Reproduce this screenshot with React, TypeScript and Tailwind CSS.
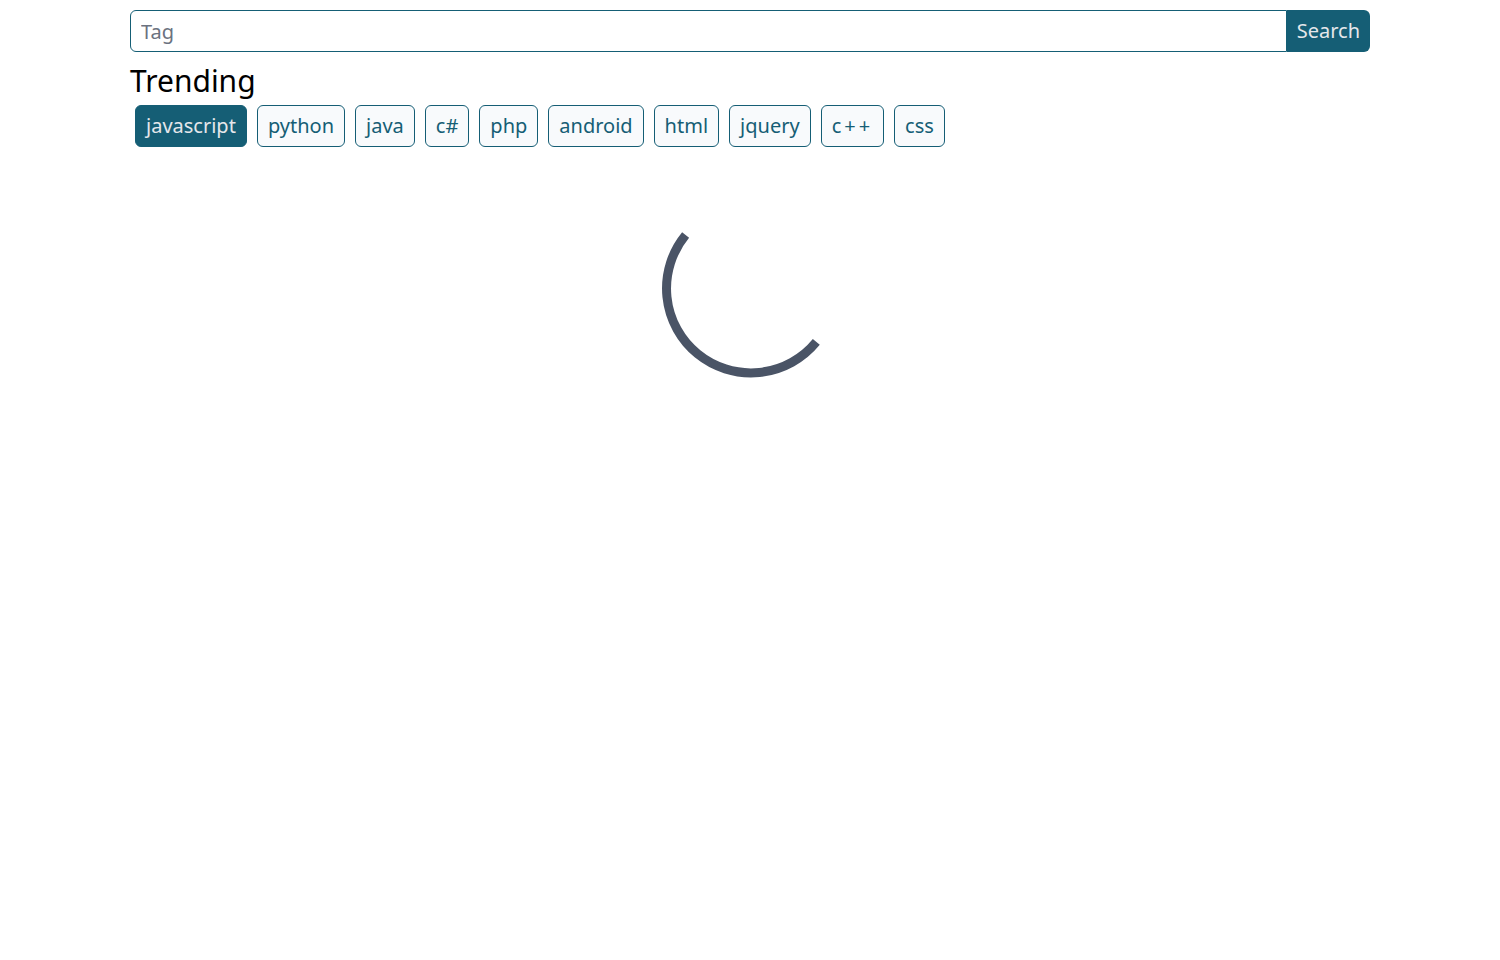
import React from "react";

const tags = ["javascript", "python", "java", "c#", "php", "android", "html", "jquery", "c++", "css"];

export default function App() {
  return (
    <div className="min-h-screen bg-white" style={{ fontFamily: '"Segoe UI", "Noto Sans", "Open Sans", sans-serif' }}>
      <div className="mx-auto w-[1240px] pt-[10px]">
        <div className="flex h-[42px]">
          <input
            className="flex-1 h-full rounded-l-[6px] border border-[#155e75] px-[10px] text-[20px] text-gray-700 placeholder:text-[#6b7280] outline-none"
            placeholder="Tag"
          />
          <button className="h-full rounded-r-[6px] bg-[#155e75] px-[10px] text-[20px] text-[#e5e7eb]">Search</button>
        </div>
        <h2 className="mt-[11px] text-[30px] leading-[36px] text-black">Trending</h2>
        <div className="flex flex-wrap mt-[6px]">
          {tags.map((t, i) => (
            <button
              key={t}
              className={
                i === 0
                  ? "mx-[5px] h-[42px] rounded-[6px] border border-[#155e75] bg-[#155e75] px-[10px] text-[20px] text-[#e5e7eb]"
                  : t === "c++"
                  ? "mx-[5px] h-[42px] rounded-[6px] border border-[#155e75] bg-[#f8fafc] px-[10px] text-[20px] text-[#155e75] tracking-[3px]"
                  : "mx-[5px] h-[42px] rounded-[6px] border border-[#155e75] bg-[#f8fafc] px-[10px] text-[20px] text-[#155e75]"
              }
            >
              {t}
            </button>
          ))}
        </div>
        <div className="flex justify-center mt-[52px]">
          <svg width="180" height="180" viewBox="0 0 180 180">
            <path
              d="M 25.6 36 A 84 84 0 0 0 156.3 142.9"
              fill="none"
              stroke="#4a5466"
              strokeWidth="9"
            />
          </svg>
        </div>
      </div>
    </div>
  );
}
